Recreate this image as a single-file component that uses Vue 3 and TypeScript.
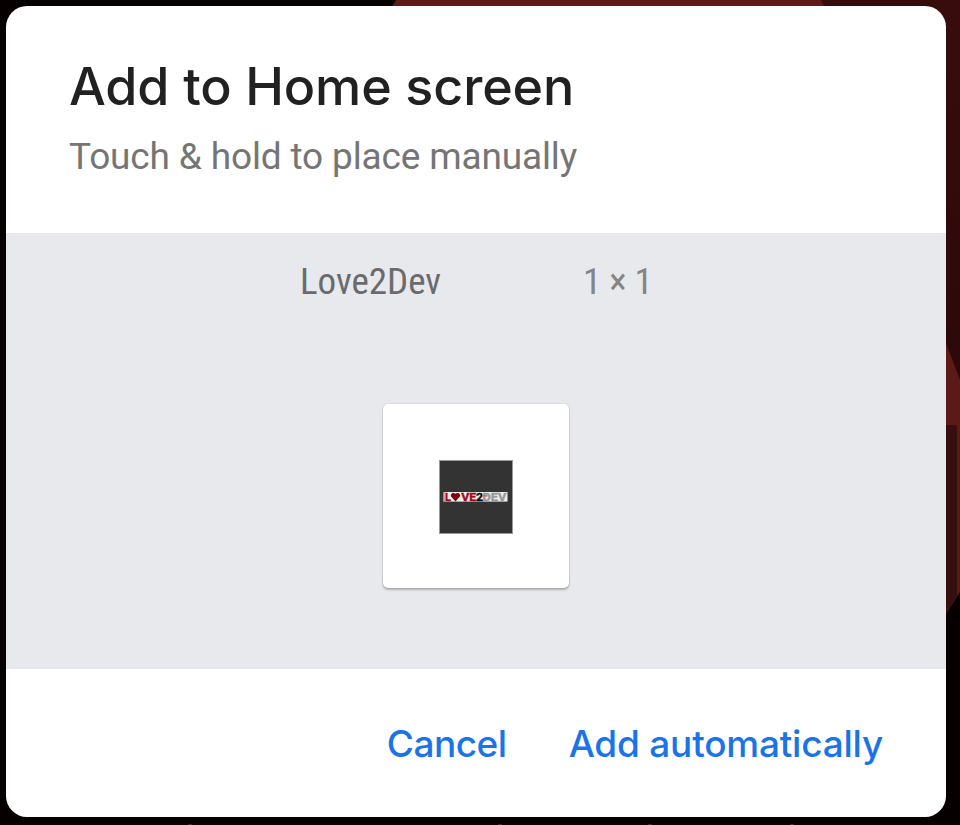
<script setup lang="ts">
interface Shortcut {
  name: string
  size: string
}

const shortcut: Shortcut = { name: 'Love2Dev', size: '1 × 1' }
</script>

<template>
  <main class="screen">
    <svg class="wallpaper" viewBox="0 0 960 825" aria-hidden="true">
      <defs>
        <linearGradient id="wine" x1="0" y1="0" x2="0" y2="1">
          <stop offset="0" stop-color="#380c0c" />
          <stop offset="1" stop-color="#2b0909" />
        </linearGradient>
      </defs>
      <rect width="960" height="825" fill="#060001" />
      <path d="M820 0H960V390L940 340Z" fill="url(#wine)" />
      <path d="M396 0H821L825 8H391Z" fill="#5f1917" />
      <path d="M944 338L960 380V592L944 617Z" fill="#5c1a16" />
      <path d="M944 425H957V597L944 617Z" fill="#35100e" />
      <path d="M188 824h4v1h-4zM498 824h4v1h-4zM648 824h4v1h-4zM790 824h4v1h-4z" fill="#363232" />
    </svg>
    <section class="dialog" role="dialog">
      <header class="heading">
        <h1 class="title">Add to Home screen</h1>
        <p class="subtitle">Touch &amp; hold to place manually</p>
      </header>
      <div class="preview">
        <div class="labels">
          <span class="name">{{ shortcut.name }}</span>
          <span class="size">{{ shortcut.size }}</span>
        </div>
        <div class="card">
          <svg class="logo" width="74" height="74" viewBox="0 0 74 74">
            <rect width="74" height="74" fill="#999" />
            <rect x="1" y="1" width="72" height="72" fill="#333" />
            <rect x="4.5" y="32" width="64" height="9.6" fill="#eee" />
            <rect x="4.5" y="32" width="1.2" height="9.6" fill="#b88" />
            <g class="logo-text">
              <text x="6" y="41" fill="#a00d16" stroke="#a00d16">L</text>
              <path d="M16.5 41.4L12.3 36.8C10.7 34.3 13.9 31.4 16.5 33.8C19.1 31.4 22.3 34.3 20.7 36.8Z" fill="#850007" />
              <text x="22.3" y="41" fill="#a00d16" stroke="#a00d16" textLength="15" lengthAdjust="spacingAndGlyphs">VE</text>
              <text x="37" y="41" fill="#111" stroke="#111" textLength="7" lengthAdjust="spacingAndGlyphs">2</text>
              <text x="43.5" y="41" fill="#999" stroke="#999" textLength="24" lengthAdjust="spacingAndGlyphs">DEV</text>
              <path d="M43 35h5.5v1.6h-5.5z" fill="#d66" />
            </g>
          </svg>
        </div>
      </div>
      <footer class="actions">
        <button class="action cancel" type="button">Cancel</button>
        <button class="action confirm" type="button">Add automatically</button>
      </footer>
    </section>
  </main>
</template>

<style>
body {
  margin: 0;
  overflow: hidden;
}
</style>

<style scoped>
.screen {
  display: grid;
  width: 960px;
  height: 825px;
  overflow: hidden;
  background: #060001;
}
.wallpaper,
.dialog {
  grid-area: 1 / 1;
}
.wallpaper {
  width: 960px;
  height: 825px;
}
.dialog {
  z-index: 1;
  display: flex;
  flex-direction: column;
  width: 940px;
  height: 811px;
  margin: 6px 0 0 6px;
  overflow: hidden;
  border-radius: 21px;
  background: #fff;
}
.heading {
  box-sizing: border-box;
  height: 227px;
  padding: 49px 63px 0;
}
.title {
  margin: 0;
  color: #212121;
  font: 500 52px/64px Inter, sans-serif;
  letter-spacing: -0.12px;
  white-space: nowrap;
}
.subtitle {
  margin: 16px 0 0;
  color: #757575;
  font: 400 37px/44px Roboto, sans-serif;
  letter-spacing: -0.15px;
  white-space: nowrap;
}
.preview {
  display: flex;
  flex-direction: column;
  align-items: center;
  height: 436px;
  background: #e8e9ed;
}
.labels {
  display: flex;
  gap: 143px;
  width: 352px;
  margin-top: 27px;
  font: 400 37px/44px "Roboto Condensed", Roboto, sans-serif;
  white-space: nowrap;
}
.name {
  width: 140px;
  color: #6a6b6d;
}
.size {
  color: #848587;
  letter-spacing: -0.3px;
}
.card {
  box-sizing: border-box;
  display: grid;
  place-items: center;
  width: 186px;
  height: 184px;
  margin-top: 100px;
  padding: 2px 1px 0 0;
  border-radius: 5px;
  background: #fff;
  box-shadow: 0 2px 2px rgb(0 0 0 / 24%), 0 0 2px rgb(0 0 0 / 18%);
}
.logo {
  display: block;
}
.logo-text {
  font: 700 11px Roboto, sans-serif;
  stroke-width: 0.4px;
}
.logo-text path {
  stroke: none;
}
.actions {
  display: flex;
  justify-content: flex-end;
  gap: 62px;
  padding: 51px 63px 0 0;
}
.action {
  padding: 0;
  border: 0;
  background: none;
  color: #1a73e8;
  font: 500 37px/48px Inter, sans-serif;
  letter-spacing: -0.22px;
  white-space: nowrap;
}
.cancel {
  letter-spacing: -0.5px;
}
</style>
